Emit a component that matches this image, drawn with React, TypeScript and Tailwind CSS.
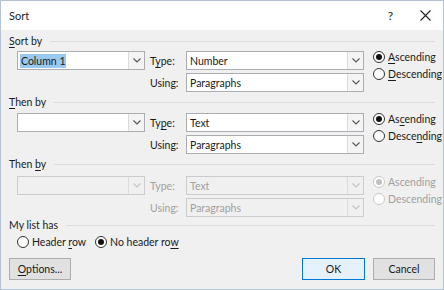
import React from 'react';

const font = { fontFamily: '"Segoe UI", Lato, "Noto Sans", sans-serif' };

const Chevron: React.FC<{ disabled?: boolean }> = ({ disabled }) => (
  <svg width="8" height="5" viewBox="0 0 8 5" className="block">
    <path d="M0.5 0.5 L4 4 L7.5 0.5" fill="none" stroke={disabled ? '#c4c4c4' : '#5a5a5a'} strokeWidth="1.2" />
  </svg>
);

const Combo: React.FC<{ value?: string; width: string; disabled?: boolean; selected?: boolean }> = ({ value, width, disabled, selected }) => (
  <div
    className={`flex h-[19px] shrink-0 ${width} items-stretch border ${disabled ? 'border-[#cccccc] bg-[#f0f0f0]' : 'border-[#abadb3] bg-white'}`}
  >
    <div className="flex flex-1 items-center px-[2px]">
      {value && (
        <span
          className={`px-[1px] leading-[14px] ${selected ? 'bg-[#99c9ef] text-[#1a1a1a]' : disabled ? 'text-[#a0a0a0]' : 'text-[#1a1a1a]'}`}
        >
          {value}
        </span>
      )}
    </div>
    <div className={`flex w-[16px] items-center justify-center border-l ${disabled ? 'border-[#dcdcdc]' : 'border-[#dcdcdc] bg-[#f4f4f4]'}`}>
      <Chevron disabled={disabled} />
    </div>
  </div>
);

const Radio: React.FC<{ label: React.ReactNode; checked?: boolean; disabled?: boolean }> = ({ label, checked, disabled }) => (
  <div className={`flex items-center gap-[3px] whitespace-nowrap ${disabled ? 'text-[#a0a0a0]' : 'text-[#1a1a1a]'}`}>
    <span
      className={`flex h-[12px] w-[12px] shrink-0 items-center justify-center rounded-full border ${disabled ? 'border-[#c8c8c8]' : 'border-[#333333]'} bg-white`}
    >
      {checked && <span className={`h-[6px] w-[6px] rounded-full ${disabled ? 'bg-[#c0c0c0]' : 'bg-[#111111]'}`} />}
    </span>
    <span>{label}</span>
  </div>
);

const GroupLabel: React.FC<{ children: React.ReactNode }> = ({ children }) => (
  <div className="flex h-[14px] items-center gap-[8px]">
    <span className="text-[#1a1a1a]">{children}</span>
    <div className="h-px flex-1 bg-[#dcdcdc]" />
  </div>
);

const U: React.FC<{ children: React.ReactNode }> = ({ children }) => <span className="underline underline-offset-2">{children}</span>;

const SortGroup: React.FC<{
  title: React.ReactNode;
  column?: string;
  type: string;
  typeLabel: React.ReactNode;
  asc: React.ReactNode;
  desc: React.ReactNode;
  disabled?: boolean;
  selected?: boolean;
  mt: string;
}> = ({ title, column, type, typeLabel, asc, desc, disabled, selected, mt }) => {
  const lbl = disabled ? 'text-[#a0a0a0]' : 'text-[#1a1a1a]';
  return (
    <div>
      <GroupLabel>{title}</GroupLabel>
      <div className={`${mt} flex pl-[8px]`}>
        <Combo value={column} width="w-[128px]" disabled={disabled} selected={selected} />
        <div className="ml-[5px] flex shrink-0 flex-col gap-[3px]">
          <div className="flex items-center">
            <span className={`w-[36px] ${lbl}`}>{typeLabel}</span>
            <Combo value={type} width="w-[178px]" disabled={disabled} />
          </div>
          <div className="flex items-center">
            <span className={`w-[36px] ${lbl}`}>Using:</span>
            <Combo value="Paragraphs" width="w-[178px]" disabled={disabled} />
          </div>
        </div>
        <div className="ml-[9px] -mt-[1px] flex shrink-0 flex-col gap-[3px]">
          <Radio label={asc} checked disabled={disabled} />
          <Radio label={desc} disabled={disabled} />
        </div>
      </div>
    </div>
  );
};

export default function App() {
  return (
    <div className="h-[290px] w-[444px] overflow-hidden border border-[#b4c3d4] text-[10.5px] leading-[14px]" style={font}>
      <div className="flex h-[29px] items-center bg-white pl-[8px] pr-[12px] text-[#1a1a1a]">
        <span className="flex-1 text-[11px]">Sort</span>
        <span className="mr-[27px] text-[12px]">?</span>
        <svg width="11" height="11" viewBox="0 0 11 11">
          <path d="M0.5 0.5 L10.5 10.5 M10.5 0.5 L0.5 10.5" stroke="#222" strokeWidth="1.1" />
        </svg>
      </div>
      <div className="flex h-[259px] flex-col bg-[#f0f0f0] px-[8px] pt-[4px]">
        <SortGroup
          title={<><U>S</U>ort by</>}
          column="Column 1"
          selected
          type="Number"
          typeLabel={<>T<U>y</U>pe:</>}
          asc={<><U>A</U>scending</>}
          desc={<><U>D</U>escending</>}
          mt="mt-[3px]"
        />
        <div className="mt-[3px]">
          <SortGroup
            title={<><U>T</U>hen by</>}
            type="Text"
            typeLabel={<>Ty<U>p</U>e:</>}
            asc={<>As<U>c</U>ending</>}
            desc={<>Desce<U>n</U>ding</>}
            mt="mt-[4px]"
          />
        </div>
        <div className="mt-[3px]">
          <SortGroup
            title={<>Then <U>b</U>y</>}
            type="Text"
            typeLabel="Type:"
            asc="Ascending"
            desc="Descending"
            disabled
            mt="mt-[5px]"
          />
        </div>
        <div className="mt-[1px]">
          <GroupLabel>My list has</GroupLabel>
          <div className="mt-[3px] flex gap-[9px] pl-[8px]">
            <Radio label={<>Header <U>r</U>ow</>} />
            <Radio label={<>No header ro<U>w</U></>} checked />
          </div>
        </div>
        <div className="mt-[9px] flex items-center">
          <button className="h-[22px] w-[62px] border border-[#adadad] bg-[#e1e1e1] text-[#1a1a1a]">
            <U>O</U>ptions...
          </button>
          <div className="flex-1" />
          <button className="h-[22px] w-[63px] border border-[#0078d7] bg-[#e5f1fb] text-[#1a1a1a]">OK</button>
          <button className="ml-[8px] h-[22px] w-[62px] border border-[#adadad] bg-[#e1e1e1] text-[#1a1a1a]">Cancel</button>
        </div>
      </div>
    </div>
  );
}
